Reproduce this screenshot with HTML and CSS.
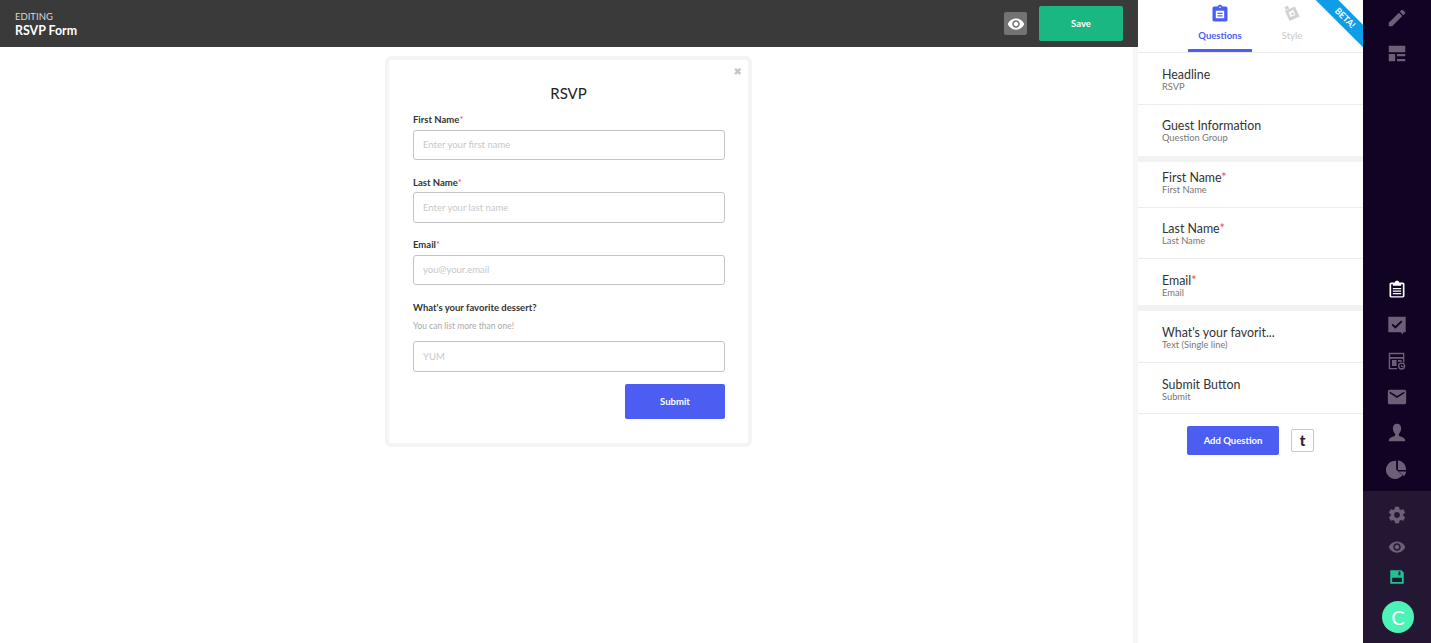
FILE: index.html
```html
<!DOCTYPE html>
<html lang="en">
<head>
<meta charset="utf-8">
<title>RSVP Form</title>
<link rel="stylesheet" href="styles.css">
</head>
<body>
<div class="app">
  <main class="main">
    <header class="topbar">
      <div class="title">
        <div class="eyebrow">EDITING</div>
        <div class="name">RSVP Form</div>
      </div>
      <div class="top-actions">
        <button class="preview"><svg viewBox="0 0 24 24" width="18" height="18"><path fill="#fff" d="M12 4.5C7 4.5 2.73 7.61 1 12c1.73 4.39 6 7.5 11 7.5s9.27-3.11 11-7.5c-1.73-4.39-6-7.5-11-7.5zM12 17c-2.76 0-5-2.24-5-5s2.24-5 5-5 5 2.24 5 5-2.24 5-5 5zm0-8c-1.66 0-3 1.34-3 3s1.34 3 3 3 3-1.34 3-3-1.34-3-3-3z"/></svg></button>
        <button class="save">Save</button>
      </div>
    </header>
    <div class="canvas">
      <div class="stage">
        <div class="modal">
          <span class="close">✖</span>
          <h1 class="form-title">RSVP</h1>
          <label class="label first">First Name<span class="req">*</span></label>
          <div class="input h30">Enter your first name</div>
          <label class="label">Last Name<span class="req">*</span></label>
          <div class="input h31">Enter your last name</div>
          <label class="label tight">Email<span class="req">*</span></label>
          <div class="input h30">you@your.email</div>
          <label class="label">What's your favorite dessert?</label>
          <div class="hint">You can list more than one!</div>
          <div class="input h31">YUM</div>
          <div class="submit-row"><button class="submit">Submit</button></div>
        </div>
      </div>
      <div class="track"></div>
    </div>
  </main>

  <aside class="panel">
    <div class="ribbon">BETA!</div>
    <nav class="tabs">
      <div class="tab active">
        <svg viewBox="0 0 24 24" width="20" height="20"><path fill="#4c5ef2" d="M19 3h-4.180C14.400 1.840 13.300 1 12 1s-2.400.84-2.820 2H5c-1.100 0-2 .9-2 2v14c0 1.100.9 2 2 2h14c1.100 0 2-.9 2-2V5c0-1.100-.9-2-2-2zm-7 0c.55 0 1 .45 1 1s-.45 1-1 1-1-.45-1-1 .45-1 1-1zM7 8h10v9H7V8z"/><path fill="#4c5ef2" d="M9 10.500h6V12H9zM9 13.500h6V15H9z"/></svg>
        <span>Questions</span>
      </div>
      <div class="tab">
        <svg viewBox="0 0 24 24" width="20" height="20"><path fill="#d2d2d2" fill-rule="evenodd" d="M3.500 8 15.500 3 21 15l-12 5.500zM8 9.800l2 5.800 6-2.500-2.500-5.800z"/><path fill="#d2d2d2" d="M3 3.500 7 2l1.500 3.500-4 1.500zM10.500 11l3-1 1 2.500-3 1z"/></svg>
        <span>Style</span>
      </div>
    </nav>
    <div class="rows">
      <div class="row h52"><div class="row-title">Headline</div><div class="row-sub">RSVP</div></div>
      <div class="row h51 pt13 last"><div class="row-title">Guest Information</div><div class="row-sub">Question Group</div></div>
      <div class="band"></div>
      <div class="row h46 pt8"><div class="row-title">First Name<span class="req">*</span></div><div class="row-sub">First Name</div></div>
      <div class="row h51 pt13"><div class="row-title">Last Name<span class="req">*</span></div><div class="row-sub">Last Name</div></div>
      <div class="row h46 last"><div class="row-title">Email<span class="req">*</span></div><div class="row-sub">Email</div></div>
      <div class="band"></div>
      <div class="row h52"><div class="row-title">What's your favorit...</div><div class="row-sub">Text (Single line)</div></div>
      <div class="row h51"><div class="row-title">Submit Button</div><div class="row-sub">Submit</div></div>
    </div>
    <div class="panel-actions">
      <button class="add">Add Question</button>
      <button class="tumblr">t</button>
    </div>
  </aside>

  <nav class="rail">
    <div class="rail-upper">
      <div class="rail-group top">
        <svg viewBox="0 0 24 24" width="22" height="22"><path d="M3 17.250V21h3.750L17.810 9.940l-3.750-3.750L3 17.250zM20.710 7.040a1 1 0 0 0 0-1.410l-2.340-2.340a1 1 0 0 0-1.410 0l-1.830 1.830 3.750 3.750 1.830-1.830z"/></svg>
        <svg viewBox="0 0 24 24" width="22" height="22"><path d="M3 3h18v7H3zM3 12h7v8H3zM12 12h9v2.500h-9zM12 17.500h9V20h-9z"/></svg>
      </div>
      <div class="rail-group mid">
        <svg class="on" viewBox="0 0 24 24" width="20" height="20"><path d="M19 3h-4.180C14.400 1.840 13.300 1 12 1s-2.400.84-2.820 2H5c-1.100 0-2 .9-2 2v14c0 1.100.9 2 2 2h14c1.100 0 2-.9 2-2V5c0-1.100-.9-2-2-2zm0 16.500H5V5h2v2h10V5h2z"/><path d="M7 9.500h10V11H7zM7 12.500h10V14H7zM7 15.500h10V17H7z"/></svg>
        <svg viewBox="0 0 24 24" width="22" height="22"><path d="M2.500 3h19v17h-3v2.500L16 20H2.500zM7.300 10.500 6 11.900l4.200 4.100L18 8.400 16.600 7l-6.400 6.200z" fill-rule="evenodd"/></svg>
        <svg viewBox="0 0 24 24" width="22" height="22"><path fill-rule="evenodd" d="M3 3h17v10.500h-1.500V9.500H4.500V19.500H12V21H3zM4.500 4.500V7.500h14V4.500zM6.500 11h5v6.500h-5zM13 11h4v1.800h-4z"/><path fill-rule="evenodd" d="M17 13.500a4 4 0 1 1 0 8 4 4 0 0 1 0-8zm0 1.500a2.500 2.500 0 1 0 0 5 2.500 2.500 0 0 0 0-5zM16.500 16h1v1.500H19v1h-2.500z"/></svg>
        <svg viewBox="0 0 24 24" width="22" height="22"><path d="M20 4H4c-1.100 0-2 .9-2 2v12c0 1.100.9 2 2 2h16c1.100 0 2-.9 2-2V6c0-1.100-.9-2-2-2zm0 4l-8 5-8-5V6l8 5 8-5v2z"/></svg>
        <svg viewBox="0 0 24 24" width="22" height="22"><path d="M12 2c2.900 0 4.500 2.300 4.500 5s-1.300 5-2.600 6c0 1.500.5 2.300 2 2.900 2.700 1 5 1.800 5.100 5.100H3c.1-3.300 2.400-4.100 5.100-5.100 1.500-.6 2-1.400 2-2.900-1.300-1-2.600-3.300-2.600-6S9.100 2 12 2z"/></svg>
        <svg viewBox="0 0 24 24" width="22" height="22"><path d="M11 3v9.500l7 6.300A10 10 0 1 1 11 3zM13 2.500a10 10 0 0 1 8.900 10.500H13zM14 14.800h8a10 10 0 0 1-2.300 5z"/></svg>
      </div>
    </div>
    <div class="rail-lower">
      <svg viewBox="0 0 24 24" width="20" height="20"><path d="M19.430 12.980c.04-.32.070-.64.070-.98s-.03-.66-.07-.98l2.110-1.650c.19-.15.240-.42.120-.64l-2-3.460c-.12-.22-.39-.3-.61-.22l-2.490 1c-.52-.4-1.080-.73-1.690-.98l-.38-2.650A.488.488 0 0 0 14 2h-4c-.25 0-.46.18-.49.42l-.38 2.650c-.61.25-1.170.59-1.690.98l-2.490-1c-.23-.09-.49 0-.61.22l-2 3.460c-.13.22-.07.49.12.64l2.110 1.650c-.04.32-.07.650-.07.980s.03.660.07.980l-2.110 1.650c-.19.150-.24.420-.12.640l2 3.460c.12.220.390.300.610.220l2.490-1c.520.400 1.080.730 1.690.980l.380 2.650c.030.240.240.420.490.420h4c.250 0 .460-.180.490-.420l.380-2.650c.610-.250 1.170-.590 1.690-.980l2.490 1c.230.090.490 0 .610-.220l2-3.460c.120-.220.070-.490-.120-.640l-2.110-1.650zM12 15.500c-1.930 0-3.500-1.570-3.500-3.500s1.570-3.500 3.500-3.500 3.500 1.570 3.500 3.500-1.570 3.500-3.500 3.500z"/></svg>
      <svg class="eye" viewBox="0 0 24 24" width="18" height="18"><path d="M12 4.500C7 4.500 2.730 7.610 1 12c1.730 4.390 6 7.500 11 7.500s9.270-3.110 11-7.500c-1.730-4.390-6-7.500-11-7.500zM12 17c-2.760 0-5-2.240-5-5s2.240-5 5-5 5 2.240 5 5-2.240 5-5 5zm0-8c-1.660 0-3 1.340-3 3s1.340 3 3 3 3-1.340 3-3-1.340-3-3-3z"/></svg>
      <svg class="disk" viewBox="0 0 24 24" width="18" height="18"><path fill-rule="evenodd" d="M3 3h15l3 3v15H3zM14 4.500v5h2.500v-5zM5.500 13v5.800h13V13z"/></svg>
      <div class="avatar">C</div>
    </div>
  </nav>
</div>
</body>
</html>
```
FILE: styles.css
```css
* { box-sizing: border-box; }
html, body { margin: 0; height: 100%; }
body { font-family: Lato, "Liberation Sans", sans-serif; background: #fff; color: #333; overflow: hidden; }
button { font-family: inherit; border: 0; padding: 0; margin: 0; cursor: pointer; }

.app { display: flex; width: 1431px; height: 643px; }

.main { width: 1138px; display: flex; flex-direction: column; }
.topbar { height: 47px; background: #3a3a3a; display: flex; align-items: center; justify-content: space-between; padding: 0 15px; }
.eyebrow { font-size: 9.5px; line-height: 12px; color: #d8d8d8; margin-top: 1px; }
.name { font-size: 12.4px; line-height: 15px; font-weight: 700; color: #fff; }
.top-actions { display: flex; align-items: center; gap: 12px; }
.preview { width: 23px; height: 23px; background: #737373; border-radius: 2px; display: flex; align-items: center; justify-content: center; }
.save { width: 84px; height: 35px; background: #1ab783; color: #fff; font-size: 9.5px; font-weight: 700; border-radius: 2px; }

.canvas { flex: 1; display: flex; }
.stage { flex: 1; display: flex; justify-content: center; align-items: flex-start; padding: 9px 0 0 4px; }
.track { width: 5px; background: #f6f6f6; }

.modal { position: relative; width: 367px; height: 391px; border: 4px solid #f4f4f4; border-radius: 6px; background: #fff; padding: 0 24px; }
.close { position: absolute; top: 5px; right: 6px; font-size: 10px; line-height: 14px; color: #c4c4c4; font-family: "DejaVu Sans", sans-serif; }
.form-title { margin: 0; padding-top: 23px; font-size: 15px; line-height: 20px; font-weight: 400; color: #222; text-align: center; }
.label { display: block; font-size: 9.5px; line-height: 12px; font-weight: 700; color: #333; margin-top: 17px; margin-bottom: 3px; }
.label.first { margin-top: 11px; margin-bottom: 4px; }
.label.tight { margin-top: 16px; margin-bottom: 4px; }
.req { color: #e8505b; font-weight: 400; }
.input { width: 312px; border: 1px solid #c4c4c4; border-radius: 3px; padding-left: 9px; display: flex; align-items: center; font-size: 9.5px; color: #c8c8c8; }
.h30 { height: 30px; padding-bottom: 1px; }
.h31 { height: 31px; }
.hint { font-size: 8.5px; line-height: 12px; color: #aaa; margin: 6px 0 9px; }
.submit-row { width: 312px; display: flex; justify-content: flex-end; margin-top: 12px; }
.submit { width: 100px; height: 35px; background: #4c5ef2; color: #fff; font-size: 9.5px; font-weight: 700; border-radius: 2px; }

.panel { position: relative; width: 225px; overflow: hidden; background: #fff; }
.ribbon { position: absolute; top: 10px; left: 167px; width: 80px; height: 16px; line-height: 16px; background: #0f9de8; color: #fff; font-size: 9px; font-weight: 700; text-align: center; transform: rotate(45deg); }
.tabs { height: 53px; display: flex; gap: 8px; padding-left: 50px; border-bottom: 1px solid #ececec; }
.tab { width: 64px; height: 52px; display: flex; flex-direction: column; align-items: center; justify-content: flex-start; padding-top: 4px; font-size: 9.5px; line-height: 12px; color: #c8c8c8; font-weight: 400; }
.tab span { margin-top: 6px; }
.tab.active { color: #4c5ef2; font-weight: 700; border-bottom: 3px solid #4c5ef2; }

.rows { display: flex; flex-direction: column; }
.row { padding: 14px 0 0 24px; border-bottom: 1px solid #ececec; }
.row.last { border-bottom: 0; }
.h52 { height: 52px; }
.h51 { height: 51px; }
.h46 { height: 46px; }
.row.pt13 { padding-top: 13px; }
.row.pt8 { padding-top: 8px; }
.row-title { font-size: 12.4px; line-height: 16px; margin-bottom: -2px; color: #333; }
.row-sub { font-size: 9.3px; line-height: 12px; color: #777; }
.band { height: 6px; background: #f2f2f2; }

.panel-actions { display: flex; align-items: center; justify-content: center; gap: 12px; padding: 12px 0 0; }
.add { width: 92px; height: 29px; background: #4c5ef2; color: #fff; font-size: 9.5px; font-weight: 700; border-radius: 2px; }
.tumblr { width: 23px; height: 23px; background: #fff; border: 1px solid #c8c8c8; border-radius: 2px; color: #2b2135; font-size: 15px; font-weight: 900; line-height: 1; }

.rail { width: 68px; background: #100324; display: flex; flex-direction: column; }
.rail svg { display: block; fill: #6c6078; }
.rail-upper { flex: 1; display: flex; flex-direction: column; justify-content: space-between; align-items: center; padding: 7px 0 11px; }
.rail-group { display: flex; flex-direction: column; align-items: center; }
.rail-group.top { gap: 14px; }
.rail-group.mid { gap: 14px; }
.rail svg.on { fill: #fff; margin-top: 1px; }
.rail-lower { height: 152px; background: #231733; display: flex; flex-direction: column; align-items: center; padding-top: 14px; }
.rail svg.eye { margin-top: 13px; }
.rail svg.disk { fill: #1fc38e; margin-top: 12px; }
.avatar { width: 32px; height: 32px; margin: 15px 0 0 2px; border-radius: 50%; background: #4df2b8; color: #fff; font-size: 20px; line-height: 32px; text-align: center; }
```
